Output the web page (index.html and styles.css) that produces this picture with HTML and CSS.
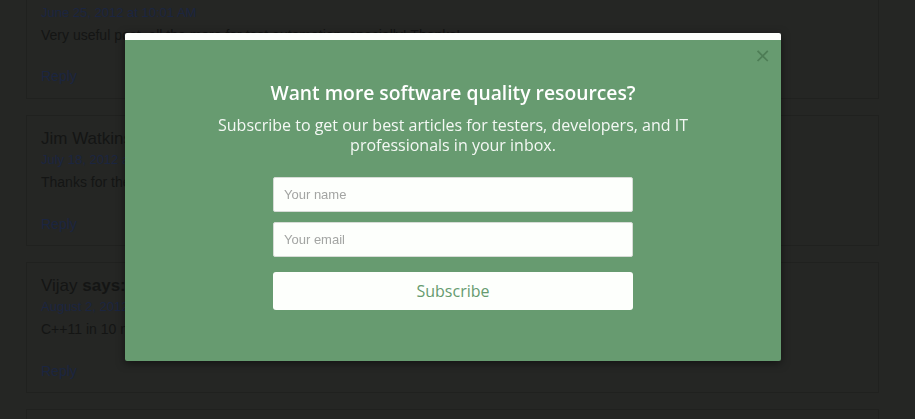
FILE: index.html
```html
<!DOCTYPE html>
<html lang="en">
<head>
<meta charset="utf-8">
<title>Comments</title>
<link rel="stylesheet" href="styles.css">
</head>
<body>
<div class="comments">
  <div class="comment comment-first">
    <a class="date" href="#">June 25, 2012 at 10:01 AM</a>
    <p class="text">Very useful post, all the more for test automation, specially! Thanks!</p>
    <a class="reply" href="#">Reply</a>
  </div>
  <div class="comment">
    <div class="author">Jim Watkins <b>says:</b></div>
    <a class="date" href="#">July 18, 2012 at 3:22 PM</a>
    <p class="text">Thanks for the great summary of features.</p>
    <a class="reply" href="#">Reply</a>
  </div>
  <div class="comment">
    <div class="author">Vijay <b>says:</b></div>
    <a class="date" href="#">August 2, 2012 at 8:45 AM</a>
    <p class="text">C++11 in 10 minutes, nice one.</p>
    <a class="reply" href="#">Reply</a>
  </div>
  <div class="comment"></div>
</div>

<div class="modal">
  <button class="close" type="button" aria-label="Close">×</button>
  <h2 class="title">Want more software quality resources?</h2>
  <p class="subtitle">Subscribe to get our best articles for testers, developers, and IT professionals in your inbox.</p>
  <form class="form">
    <input class="field" type="text" placeholder="Your name">
    <input class="field" type="email" placeholder="Your email">
    <button class="submit" type="button">Subscribe</button>
  </form>
</div>
</body>
</html>
```
FILE: styles.css
```css
html, body {
  margin: 0;
  padding: 0;
  background: #252624;
  overflow: hidden;
}
body {
  font-family: "Liberation Sans", Arial, sans-serif;
  height: 419px;
}
.comments {
  margin: 0 0 0 26px;
  width: 853px;
  height: 419px;
  overflow: hidden;
  display: flex;
  flex-direction: column;
  gap: 16px;
}
.comment {
  box-sizing: border-box;
  flex: 0 0 131px;
  border: 1px solid #20211f;
  padding: 13px 0 0 14px;
  display: flex;
  flex-direction: column;
  align-items: flex-start;
}
.comment-first {
  flex-basis: 99px;
  border-top: 0;
  padding-top: 2px;
}
.comment-first .reply { margin-top: 23px; }
.author {
  font-size: 17px;
  line-height: 20px;
  color: #141514;
}
.author b { font-weight: bold; }
.date {
  font-size: 13px;
  line-height: 16px;
  margin-top: 3px;
  color: #1b2540;
  text-decoration: none;
}
.text {
  margin: 5px 0 0;
  font-size: 14px;
  line-height: 18px;
  color: #141514;
}
.reply {
  margin-top: 24px;
  font-size: 14px;
  line-height: 18px;
  color: #1b2540;
  text-decoration: none;
}

.modal {
  position: fixed;
  top: 33px;
  left: 125px;
  width: 656px;
  height: 328px;
  box-sizing: border-box;
  background: #679b70;
  border-top: 7px solid #fdfffc;
  border-radius: 2px;
  box-shadow: 0 2px 8px rgba(0, 0, 0, 0.5);
  display: flex;
  flex-direction: column;
  align-items: center;
  padding-top: 39px;
  font-family: "Open Sans", sans-serif;
}
.close {
  position: absolute;
  top: 2px;
  right: 11px;
  background: none;
  border: 0;
  padding: 0;
  font-family: "Open Sans", sans-serif;
  font-size: 26px;
  line-height: 26px;
  color: #4e7d56;
  cursor: pointer;
}
.title {
  margin: 0;
  font-size: 19.3px;
  line-height: 28px;
  font-weight: 600;
  color: #ffffff;
}
.subtitle {
  margin: 8px 0 0;
  max-width: 480px;
  text-align: center;
  font-size: 16px;
  line-height: 20px;
  color: #f4f8f4;
}
.form {
  margin-top: 22px;
  width: 360px;
  display: flex;
  flex-direction: column;
}
.field {
  box-sizing: border-box;
  height: 35px;
  margin: 0 0 10px;
  padding: 0 10px;
  border: 1px solid #d6dcd6;
  border-radius: 2px;
  background: #fdfffc;
  font-family: "Liberation Sans", Arial, sans-serif;
  font-size: 13px;
  color: #333;
  outline: none;
}
.field::placeholder { color: #a3a5a3; }
.submit {
  margin-top: 5px;
  height: 38px;
  border: 0;
  border-radius: 3px;
  background: #fdfffc;
  font-family: "Open Sans", sans-serif;
  font-size: 16px;
  color: #669b6f;
  cursor: pointer;
}
```
